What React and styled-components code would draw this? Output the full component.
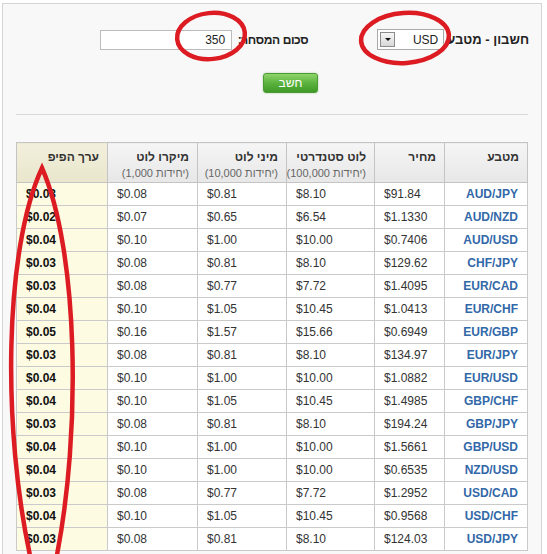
import React from 'react'
import styled, { createGlobalStyle } from 'styled-components'

const GlobalStyle = createGlobalStyle`
  body {
    margin: 0;
    background: #fff;
    font-family: "Liberation Sans", Arial, sans-serif;
    color: #333;
  }
  table, th, td, button {
    font-family: "Liberation Sans", Arial, sans-serif;
  }
`

const Page = styled.div`
  position: relative;
  width: 547px;
  height: 554px;
  overflow: hidden;
  padding-top: 3px;
  box-sizing: border-box;
`

const Panel = styled.div`
  margin-left: 2px;
  width: 538px;
  height: 560px;
  border: 1px solid #d4d4d4;
  border-bottom: 0;
  background: #f8f8f8;
  direction: rtl;
`

const FieldRow = styled.div`
  display: flex;
  align-items: center;
  padding: 25px 12px 0 0;
  height: 21px;
`

const Label = styled.span`
  flex: none;
  width: ${p => (p.width ? `${p.width}px` : 'auto')};
  font-size: ${p => p.size || 12}px;
  letter-spacing: ${p => p.spacing || 0}px;
  font-weight: bold;
  color: #222;
  margin-left: ${p => p.gap || 0}px;
  white-space: nowrap;
`

const FakeSelect = styled.div`
  flex: none;
  display: flex;
  align-items: center;
  justify-content: space-between;
  width: 58px;
  height: 19px;
  border: 1px solid #a9a9a9;
  background: #fff;
  font-size: 12px;
  color: #222;
  padding: 0 5px 0 2px;
  box-sizing: content-box;
  margin-left: 69px;
`

const ArrowButton = styled.span`
  display: flex;
  align-items: center;
  justify-content: center;
  width: 13px;
  height: 13px;
  border: 1px solid #8c8c8c;
  background: linear-gradient(#f6f6f6, #d8d8d8);
  &::after {
    content: '';
    border-left: 3px solid transparent;
    border-right: 3px solid transparent;
    border-top: 3px solid #111;
  }
`

const AmountInput = styled.div`
  flex: none;
  width: 124px;
  height: 18px;
  border: 1px solid #bcbcbc;
  background: #fff;
  font-size: 12px;
  line-height: 18px;
  color: #222;
  padding: 0 6px 0 0;
`

const ButtonRow = styled.div`
  display: flex;
  padding: 23px 223px 0 0;
`

const GreenButton = styled.button`
  width: 55px;
  height: 20px;
  border: 1px solid #4c9a36;
  border-radius: 3px;
  background: linear-gradient(#8ed46c, #5cb33e 50%, #3f9a27);
  color: #fff;
  font-size: 12px;
  padding: 0;
  box-shadow: 0 0 2px rgba(80, 160, 60, 0.5);
`

const Divider = styled.div`
  margin: 21px 13px 0 13px;
  height: 1px;
  background: #d9d9d9;
`

const Table = styled.table`
  margin: 27px 13px 0 0;
  width: 511px;
  table-layout: fixed;
  border-collapse: collapse;
  background: #fff;
  font-size: 12px;
`

const HeadCell = styled.th`
  height: 32px;
  vertical-align: top;
  text-align: right;
  padding: 7px 8px 0;
  border: 1px solid #c4c4c4;
  font-size: 12px;
  font-weight: bold;
  color: #333;
  line-height: 14px;
  white-space: nowrap;
  background: ${p => (p.pip ? 'linear-gradient(#f2f0dc, #e9e6cc)' : 'linear-gradient(#f5f5f5, #e7e7e7)')};
`

const SubTitle = styled.div`
  font-size: 11px;
  font-weight: normal;
  color: #666;
  margin-top: 2px;
`

const Row = styled.tr`
  height: 23px;
`

const Cell = styled.td`
  border: 1px solid #cacaca;
  padding: 0 9px;
  height: 22px;
  direction: ltr;
  font-size: 12px;
  text-align: ${p => (p.pair ? 'right' : 'left')};
  color: ${p => (p.pair ? '#3268a8' : p.pip ? '#111' : '#333')};
  font-weight: ${p => (p.pair || p.pip ? 'bold' : 'normal')};
  background: ${p => (p.pip ? '#fdfbe2' : '#fff')};
`

const Marks = styled.svg`
  position: absolute;
  left: 0;
  top: 0;
  pointer-events: none;
`

const columns = [
  { title: 'מטבע', width: 83 },
  { title: 'מחיר', width: 70 },
  { title: 'לוט סטנדרטי', sub: '(יחידות 100,000)', width: 88 },
  { title: 'מיני לוט', sub: '(יחידות 10,000)', width: 89 },
  { title: 'מיקרו לוט', sub: '(יחידות 1,000)', width: 90 },
  { title: 'ערך הפיפ', width: 91, pip: true }
]

const rows = [
  ['AUD/JPY', '$91.84', '$8.10', '$0.81', '$0.08', '$0.03'],
  ['AUD/NZD', '$1.1330', '$6.54', '$0.65', '$0.07', '$0.02'],
  ['AUD/USD', '$0.7406', '$10.00', '$1.00', '$0.10', '$0.04'],
  ['CHF/JPY', '$129.62', '$8.10', '$0.81', '$0.08', '$0.03'],
  ['EUR/CAD', '$1.4095', '$7.72', '$0.77', '$0.08', '$0.03'],
  ['EUR/CHF', '$1.0413', '$10.45', '$1.05', '$0.10', '$0.04'],
  ['EUR/GBP', '$0.6949', '$15.66', '$1.57', '$0.16', '$0.05'],
  ['EUR/JPY', '$134.97', '$8.10', '$0.81', '$0.08', '$0.03'],
  ['EUR/USD', '$1.0882', '$10.00', '$1.00', '$0.10', '$0.04'],
  ['GBP/CHF', '$1.4985', '$10.45', '$1.05', '$0.10', '$0.04'],
  ['GBP/JPY', '$194.24', '$8.10', '$0.81', '$0.08', '$0.03'],
  ['GBP/USD', '$1.5661', '$10.00', '$1.00', '$0.10', '$0.04'],
  ['NZD/USD', '$0.6535', '$10.00', '$1.00', '$0.10', '$0.04'],
  ['USD/CAD', '$1.2952', '$7.72', '$0.77', '$0.08', '$0.03'],
  ['USD/CHF', '$0.9568', '$10.45', '$1.05', '$0.10', '$0.04'],
  ['USD/JPY', '$124.03', '$8.10', '$0.81', '$0.08', '$0.03']
]

export default function App() {
  return (
    <Page>
      <GlobalStyle />
      <Panel>
        <FieldRow>
          <Label size={13} gap={3}>חשבון - מטבע</Label>
          <FakeSelect>
            <span>USD</span>
            <ArrowButton />
          </FakeSelect>
          <Label width={74} gap={2} spacing={-0.4}>סכום המסחר:</Label>
          <AmountInput>350</AmountInput>
        </FieldRow>
        <ButtonRow>
          <GreenButton>חשב</GreenButton>
        </ButtonRow>
        <Divider />
        <Table>
          <colgroup>
            {columns.map(c => (
              <col key={c.title} style={{ width: c.width }} />
            ))}
          </colgroup>
          <thead>
            <tr>
              {columns.map(c => (
                <HeadCell key={c.title} pip={c.pip}>
                  {c.title}
                  {c.sub && <SubTitle>{c.sub}</SubTitle>}
                </HeadCell>
              ))}
            </tr>
          </thead>
          <tbody>
            {rows.map(r => (
              <Row key={r[0]}>
                {r.map((v, i) => (
                  <Cell key={i} pair={i === 0} pip={i === 5}>
                    {v}
                  </Cell>
                ))}
              </Row>
            ))}
          </tbody>
        </Table>
      </Panel>
      <Marks width="547" height="554" viewBox="0 0 547 554">
        <g fill="none" stroke="#dc1c22" strokeWidth="4.5" strokeLinecap="round">
          <ellipse cx="211" cy="36" rx="34" ry="23" transform="rotate(-6 211 36)" />
          <ellipse cx="405" cy="38" rx="44" ry="25" transform="rotate(-4 405 38)" />
          <path d="M31 560 C2 430 4 250 42 168 C78 250 82 430 56 560" />
        </g>
      </Marks>
    </Page>
  )
}
